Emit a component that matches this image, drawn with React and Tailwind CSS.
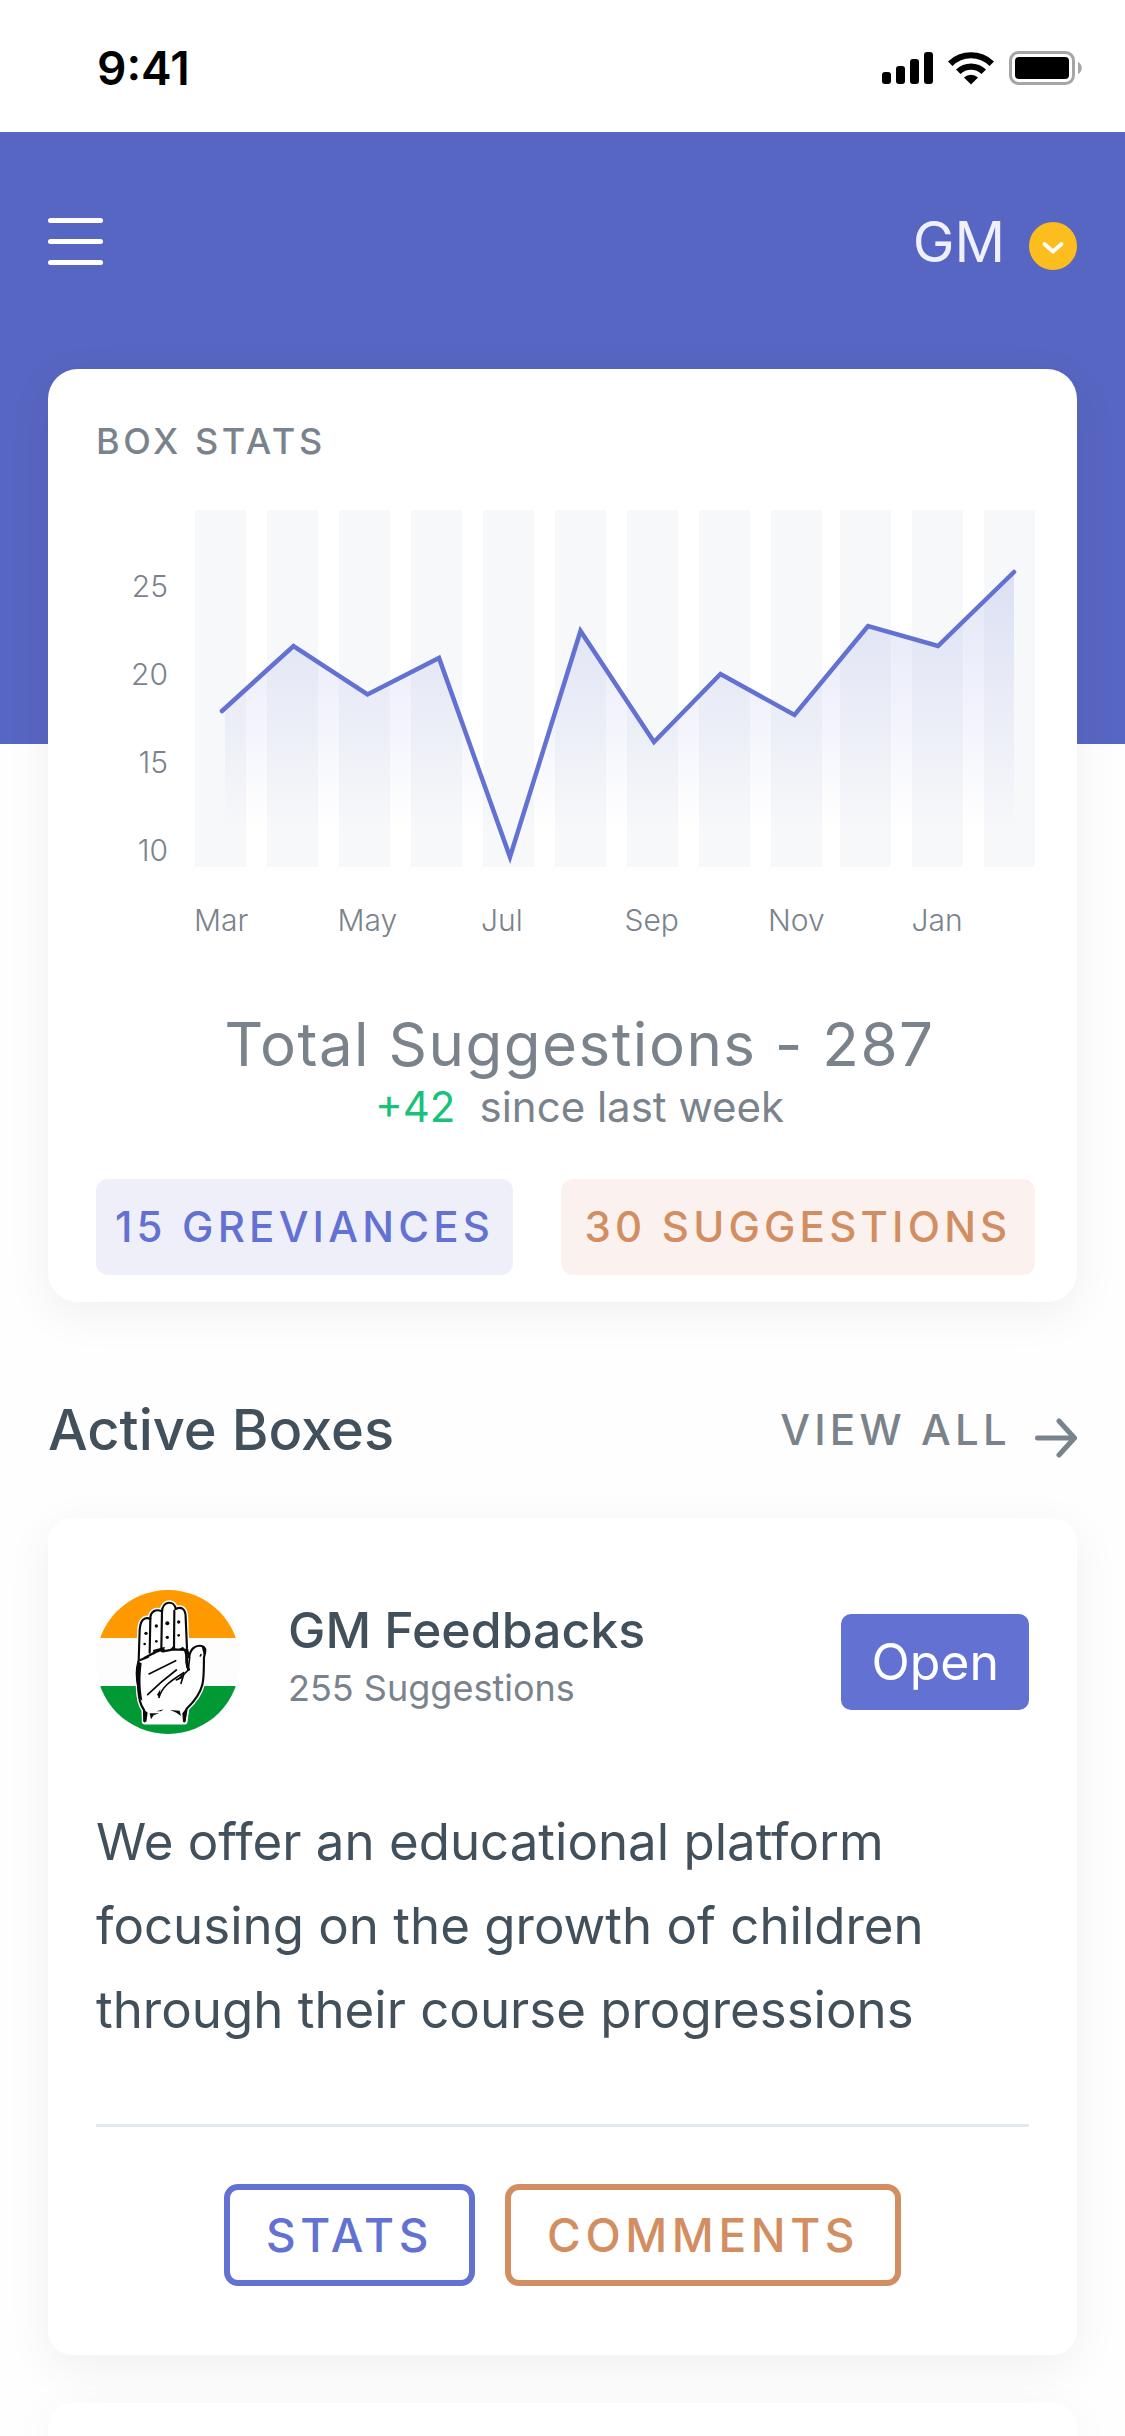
import React from "react";

const bars = [0, 72, 144, 216, 288, 360, 432, 504, 576, 645, 717, 789];
const line =
  "27,201 98.5,136 172.5,184.5 244,148 315,347 385.5,121 459,232 525.5,164 599.5,205 673,116 743,136 819,62";
const months = ["Mar", "May", "Jul", "Sep", "Nov", "Jan"];
const ticks = ["25", "20", "15", "10"];

function StatusBar() {
  return (
    <div className="flex h-[132px] items-center justify-between bg-white pr-[42px] pl-[97px] text-black">
      <span className="pt-1 text-[46px] leading-[56px] font-semibold">9:41</span>
      <svg className="mt-1 h-[34px] w-[201px]" viewBox="0 0 201 34" role="img" aria-label="Signal, Wi-Fi and battery">
        <rect x="0" y="21" width="9" height="12" rx="3" />
        <rect x="14" y="15" width="9" height="18" rx="3" />
        <rect x="28" y="8" width="9" height="25" rx="3" />
        <rect x="42" y="1" width="9" height="32" rx="3" />
        <path d="M66 10.5A33 33 0 0 1 112 10.5L107.5 15A26 26 0 0 0 70.5 15ZM74 18.5A21.5 21.5 0 0 1 104 18.5L99.5 23A15 15 0 0 0 78.5 23ZM82 26.5A10.5 10.5 0 0 1 96 26.5L89 33.5Z" />
        <rect x="128.5" y="1.5" width="63" height="31" rx="8" fill="none" stroke="#a6a6a6" strokeWidth="3" />
        <rect x="133" y="6" width="54" height="22" rx="4" />
        <path d="M196 11c5 2 5 10 0 12z" fill="#a6a6a6" />
      </svg>
    </div>
  );
}

function Chart() {
  return (
    <div className="mt-11">
      <div className="flex">
        <div className="flex w-[72px] flex-col gap-12 pt-14 text-right text-[30px] leading-10 font-light">
          {ticks.map((t) => (
            <span key={t}>{t}</span>
          ))}
        </div>
        <svg className="ml-[27px] h-[357px] min-w-0 flex-1" viewBox="0 0 840 357" preserveAspectRatio="none" role="img" aria-label="Suggestions per month">
          <defs>
            <linearGradient id="area" x1="0" y1="62" x2="0" y2="320" gradientUnits="userSpaceOnUse">
              <stop offset="0" stopColor="#6271d2" stopOpacity="0.18" />
              <stop offset="1" stopColor="#6271d2" stopOpacity="0" />
            </linearGradient>
          </defs>
          {bars.map((x) => (
            <rect key={x} x={x} width="51" height="357" fill="#f7f8fa" />
          ))}
          <polygon points={`30,357 30,198 ${line} 819,357`} fill="url(#area)" />
          <polyline points={line} fill="none" stroke="#6271d2" strokeWidth="4.5" strokeLinecap="round" />
        </svg>
      </div>
      <div className="mt-[30px] -mr-5 ml-[98px] grid grid-cols-6 text-[30px] leading-10 font-light">
        {months.map((m) => (
          <span key={m}>{m}</span>
        ))}
      </div>
    </div>
  );
}

function HandLogo() {
  return (
    <svg className="size-36 shrink-0" viewBox="49 60 432 432" role="img" aria-label="Raised hand emblem">
      <defs>
        <clipPath id="disc">
          <circle cx="265" cy="276" r="216" />
        </clipPath>
      </defs>
      <g clipPath="url(#disc)">
        <rect x="49" y="60" width="432" height="144" fill="#ff9900" />
        <rect x="49" y="204" width="432" height="144" fill="#fdfdfd" />
        <rect x="49" y="348" width="432" height="144" fill="#009933" />
      </g>
      <path
        d="M194 456L193 420C180 402 176 380 176 350C170 325 170 295 177 272L180 180C182 150 194 140 212 146C212 124 228 116 247 124C249 92 284 90 288 117C306 108 318 118 318 142L322 236L328 262C332 238 346 224 366 228C380 232 378 244 373 262C372 290 374 320 368 344C360 375 342 396 321 416L316 456Z"
        fill="#fff" stroke="#fff" strokeWidth="15" strokeLinejoin="round"
      />
      <g fill="none" stroke="#0a0a0a" strokeWidth="6.5" strokeLinecap="round" strokeLinejoin="round">
        <path d="M194 454L193 420C180 402 176 380 176 350C170 325 170 295 177 272L180 180C182 150 194 140 212 146C212 124 228 116 247 124C249 92 284 90 288 117C306 108 318 118 318 142L322 236L328 262C332 238 346 224 366 228C380 232 378 244 373 262C372 290 374 320 368 344C360 375 342 396 321 416L314 454" />
        <path d="M212 146L210 248M247 124L245 236M284 122L283 234" />
        <path d="M182 270L206 260M194 264L228 246L252 238L250 244L282 238L318 240M318 240C326 262 314 276 326 298" />
      </g>
      <g fill="none" stroke="#0a0a0a" strokeWidth="5" strokeLinecap="round" strokeLinejoin="round">
        <path d="M208 312L288 272M204 374C232 346 250 330 290 300M238 382C248 350 270 334 312 308M290 330L306 322M304 340L312 314" />
        <path d="M326 298C320 310 312 312 304 320M330 262L326 298M362 258L364 254" />
      </g>
      <path d="M174 274C168 310 170 350 178 384L188 392C180 350 182 310 186 280ZM316 234C330 262 322 280 332 300L326 304C312 276 322 262 312 240ZM220 240L256 230L248 248L238 240L222 254ZM272 238L284 224L288 240ZM296 238L310 230L318 242ZM192 418L204 428L200 456L192 454ZM322 412L308 430L310 456L318 454ZM210 430L238 430L222 436L214 448ZM272 420L300 422L304 438L290 428ZM230 424L252 418L244 424ZM366 228L380 236L374 262L368 238ZM290 330L312 312L304 326ZM232 374L242 358L240 384Z" fill="#0a0a0a" />
      <g fill="#0a0a0a">
        <circle cx="199" cy="190" r="5" />
        <circle cx="195" cy="222" r="4" />
        <circle cx="230" cy="168" r="5" />
        <circle cx="230" cy="214" r="4" />
        <circle cx="263" cy="160" r="6" />
        <circle cx="263" cy="202" r="5" />
        <circle cx="297" cy="156" r="5" />
        <circle cx="297" cy="196" r="4" />
      </g>
    </svg>
  );
}

export default function App() {
  return (
    <main className="flex min-h-screen flex-col overflow-x-hidden bg-[#fefefe] font-['Inter','Liberation_Sans',sans-serif] text-[#7a838c]">
      <StatusBar />
      <header className="flex items-start justify-between bg-[#5866c3] px-12 pt-[74px] pb-[466px] text-[#eff0fb]">
        <button aria-label="Menu" className="mt-3 flex w-[55px] flex-col gap-4">
          <span className="h-[5px] w-full rounded-full bg-white" />
          <span className="h-[5px] w-full rounded-full bg-white" />
          <span className="h-[5px] w-full rounded-full bg-white" />
        </button>
        <button className="flex items-center gap-6 text-[56px] leading-[72px]">
          GM
          <svg className="mt-2 size-12" viewBox="0 0 48 48" aria-hidden="true">
            <circle cx="24" cy="24" r="24" fill="#fcbe1f" />
            <path d="M15.5 22L24 29.5L32.5 22" fill="none" stroke="#fff" strokeWidth="3.8" strokeLinecap="round" strokeLinejoin="round" />
          </svg>
        </button>
      </header>

      <section className="relative mx-12 -mt-[375px] rounded-[30px] bg-white pt-12 pr-[42px] pb-[27px] pl-12 shadow-[0_12px_48px_rgba(0,0,0,0.06)]">
        <h2 className="text-[36px] leading-[49px] font-medium tracking-widest">BOX STATS</h2>
        <Chart />
        <p className="mt-[68px] pl-7 text-center text-[60px] leading-[72px] tracking-wide">Total Suggestions - 287</p>
        <p className="pl-7 text-center text-[42px] leading-[54px]">
          <span className="mr-6 text-[#18c27a]">+42</span>
          since last week
        </p>
        <div className="mt-[45px] grid grid-cols-[417fr_474fr] gap-12 text-[42px] leading-[96px] font-medium tracking-widest">
          <button className="rounded-[12px] bg-[#efeffa] text-[#6271d2]">15 GREVIANCES</button>
          <button className="rounded-[12px] bg-[#fbf2ef] text-[#d28d61]">30 SUGGESTIONS</button>
        </div>
      </section>

      <div className="mx-12 mt-[90px] flex items-center justify-between">
        <h2 className="text-[56px] leading-[76px] font-medium text-[#42505c]">Active Boxes</h2>
        <a href="#boxes" className="flex items-center gap-6 text-[42px] leading-[76px] font-medium tracking-widest">
          VIEW ALL
          <svg className="mt-4 h-10 w-[42px]" viewBox="0 0 42 40" fill="none" stroke="#7a838c" strokeWidth="5" strokeLinecap="round" strokeLinejoin="round" aria-hidden="true">
            <path d="M2.5 20H39M24 3L39.5 20L24 37" />
          </svg>
        </a>
      </div>

      <article id="boxes" className="relative mx-12 mt-[50px] rounded-[24px] bg-white px-12 pt-[72px] pb-[69px] text-[#42505c] shadow-[0_12px_48px_rgba(0,0,0,0.06)]">
        <div className="flex items-center">
          <HandLogo />
          <div className="ml-12 flex-1 pb-2">
            <h3 className="text-[50px] leading-[60px] font-medium">GM Feedbacks</h3>
            <p className="text-[36px] leading-[56px] text-[#7a838c]">255 Suggestions</p>
          </div>
          <button className="rounded-[10px] bg-[#6271d2] px-[30px] text-[50px] leading-[96px] text-white">Open</button>
        </div>
        <p className="mt-[66px] max-w-[860px] text-[51px] leading-[84px]">
          We offer an educational platform focusing on the growth of children through their course progressions
        </p>
        <hr className="mt-[72px] border-t-[3px] border-[#e4e9ee]" />
        <div className="mt-[57px] flex justify-center gap-[30px] text-[46px] leading-[90px] font-medium tracking-widest">
          <button className="rounded-[14px] border-6 border-[#6271d2] px-9 text-[#6271d2]">STATS</button>
          <button className="rounded-[14px] border-6 border-[#d28d61] px-9 text-[#d28d61]">COMMENTS</button>
        </div>
      </article>

      <article className="relative mx-12 mt-12 min-h-6 flex-1 rounded-t-[24px] bg-white shadow-[0_12px_48px_rgba(0,0,0,0.06)]" />
    </main>
  );
}
